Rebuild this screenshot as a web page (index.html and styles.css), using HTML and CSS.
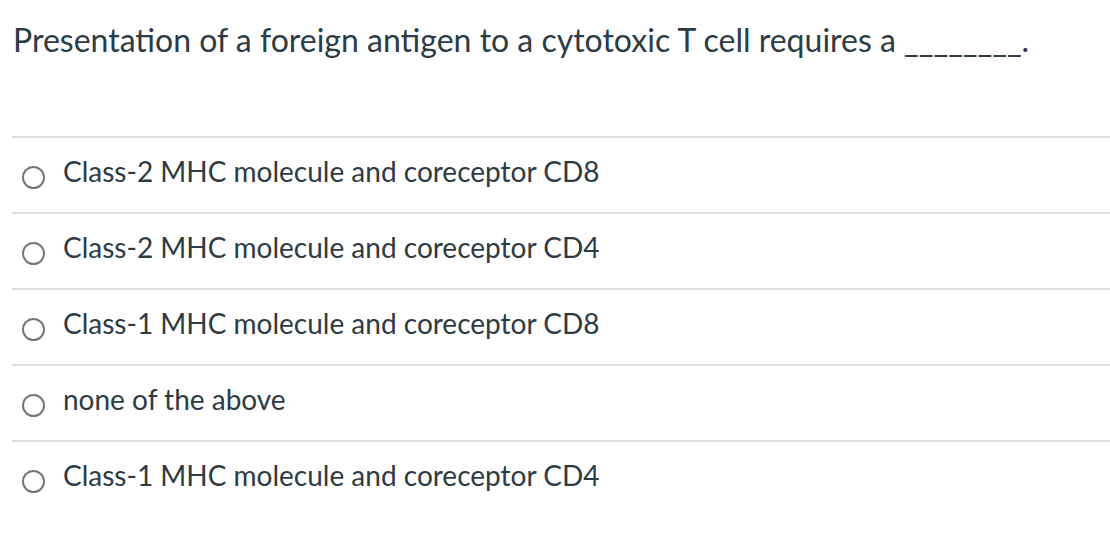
FILE: index.html
```html
<!DOCTYPE html>
<html lang="en">
<head>
<meta charset="utf-8">
<link rel="stylesheet" href="styles.css">
</head>
<body>
<div class="quiz">
  <p class="question">Presentation of a foreign antigen to a cytotoxic T cell requires a ________.</p>
  <div class="answers">
    <label class="answer"><span class="radio"></span><span class="label">Class-2 MHC molecule and coreceptor CD8</span></label>
    <label class="answer"><span class="radio"></span><span class="label">Class-2 MHC molecule and coreceptor CD4</span></label>
    <label class="answer"><span class="radio"></span><span class="label">Class-1 MHC molecule and coreceptor CD8</span></label>
    <label class="answer"><span class="radio"></span><span class="label">none of the above</span></label>
    <label class="answer"><span class="radio"></span><span class="label">Class-1 MHC molecule and coreceptor CD4</span></label>
  </div>
</div>
</body>
</html>
```
FILE: styles.css
```css
html, body {
  margin: 0;
  padding: 0;
  background: #fff;
}
body {
  font-family: Lato, "Liberation Sans", sans-serif;
  color: #2d3b45;
}
.quiz {
  padding: 0 0 0 12px;
}
.question {
  margin: 0;
  padding: 19px 0 0 1px;
  font-size: 32px;
  line-height: 42px;
  height: 136px;
  box-sizing: border-box;
}
.answers {
  display: flex;
  flex-direction: column;
}
.answer {
  display: flex;
  align-items: center;
  height: 76px;
  box-sizing: border-box;
  border-top: 2px solid #dedede;
  padding-left: 10px;
}
.radio {
  width: 19px;
  height: 19px;
  border: 2px solid #767676;
  border-radius: 50%;
  flex: none;
  margin: 4px 18px 0 0;
}
.label {
  font-size: 28px;
  line-height: 34px;
  padding-bottom: 9px;
}
```
